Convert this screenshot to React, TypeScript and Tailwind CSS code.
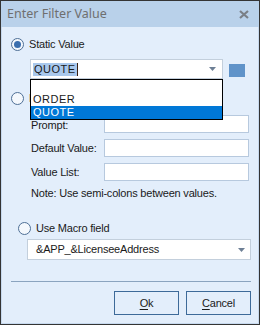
import React from "react";

function Radio({ checked, label }: { checked?: boolean; label: string }) {
  return (
    <div className="flex items-center gap-[5px] h-[13px]">
      <span className="w-[13px] h-[13px] rounded-full border border-[#4e6f96] bg-[#f4f8fd] flex items-center justify-center shrink-0">
        {checked && <span className="w-[7px] h-[7px] rounded-full bg-[#3b6fae]" />}
      </span>
      <span className="leading-[13px]">{label}</span>
    </div>
  );
}

function Arrow() {
  return (
    <svg width="7" height="4" viewBox="0 0 7 4" className="shrink-0">
      <path d="M0 0h7L3.5 4z" fill="#6d7f95" />
    </svg>
  );
}

export default function App() {
  return (
    <div className="w-[260px] h-[325px] border border-[#343434] bg-[#e3eefb] flex flex-col text-[11px] leading-[13px] tracking-[-0.2px] text-[#1a1a1a] font-['Liberation_Sans',Arial,sans-serif] overflow-hidden">
      {/* title bar */}
      <div className="h-[26px] bg-[#b9d1ea] flex items-center justify-between pl-[6px] pr-[10px] shrink-0">
        <span className="text-[12.5px] tracking-normal text-[#6f6f6f] font-['Noto_Sans',sans-serif] leading-none">
          Enter Filter Value
        </span>
        <svg width="10" height="9" viewBox="0 0 10 9">
          <path d="M1 1l8 7M9 1L1 8" stroke="#7a7f86" strokeWidth="2.2" />
        </svg>
      </div>

      <div className="flex-1 flex flex-col border-x border-b border-[#c7d9ee]">
        <div className="pl-[9px] pt-[11px]">
          <Radio checked label="Static Value" />
        </div>

        {/* static value combo */}
        <div className="flex items-center gap-[6px] ml-[28px] mt-[8px]">
          <div className="relative w-[193px]">
            <div className="h-[20px] bg-white border border-[#c3cfdc] flex items-center justify-between pl-[2px] pr-[6px]">
              <span className="flex items-center">
                <span className="bg-[#a9c8ec] px-[1px] tracking-[0.5px]">QUOTE</span>
                <span className="w-px h-[13px] bg-[#3a2010]" />
              </span>
              <Arrow />
            </div>
            <div className="absolute left-0 top-[20px] w-[193px] h-[41px] bg-white border border-black z-10 flex flex-col pt-[13px]">
              <div className="h-[13px] pl-[2px] tracking-[0.5px]">ORDER</div>
              <div className="h-[13px] pl-[2px] bg-[#0078d7] text-white tracking-[0.5px]">QUOTE</div>
            </div>
          </div>
          <span className="w-[16px] h-[13px] bg-[#6093c9] mt-[2px]" />
        </div>

        <div className="pl-[9px] mt-[13px]">
          <Radio label="Prompt" />
        </div>

        {/* prompt fields */}
        <div className="grid grid-cols-[73px_145px] gap-y-[6px] ml-[29px] mt-[10px] items-center">
          <span className="pt-[3px]">Prompt:</span>
          <div className="h-[18px] bg-white border border-[#b7c9de]" />
          <span>Default Value:</span>
          <div className="h-[18px] bg-white border border-[#b7c9de]" />
          <span>Value List:</span>
          <div className="h-[18px] bg-white border border-[#b7c9de]" />
        </div>
        <div className="ml-[29px] mt-[6px]">
          Note: Use semi-colons between values.
        </div>

        <div className="pl-[16px] mt-[22px]">
          <Radio label="Use Macro field" />
        </div>

        <div className="ml-[25px] mr-[7px] mt-[4px] h-[21px] bg-white border border-[#c3cfdc] flex items-center justify-between pl-[8px] pr-[5px]">
          <span>&amp;APP_&amp;LicenseeAddress</span>
          <Arrow />
        </div>

        <div className="ml-[9px] mr-[7px] mt-[21px] h-px bg-[#8ba4bf]" />

        <div className="flex justify-end gap-[7px] mr-[7px] mt-[9px]">
          <button className="w-[65px] h-[24px] border border-[#3d6a99] bg-[#e3eefb] text-[#1a1a1a]">
            <span className="underline underline-offset-2">O</span>k
          </button>
          <button className="w-[65px] h-[24px] border border-[#3d6a99] bg-[#e3eefb] text-[#1a1a1a]">
            <span className="underline underline-offset-2">C</span>ancel
          </button>
        </div>
      </div>
    </div>
  );
}
